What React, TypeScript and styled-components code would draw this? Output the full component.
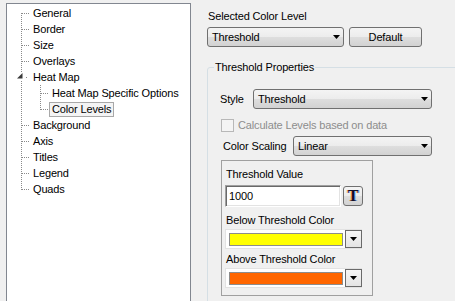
import styled, { createGlobalStyle } from 'styled-components'

const Global = createGlobalStyle`
  html, body {
    margin: 0;
    padding: 0;
    overflow: hidden;
    background: #f0f0f0;
  }
  body {
    font-family: "Liberation Sans", Arial, sans-serif;
    font-size: 11px;
    letter-spacing: -0.15px;
    color: #000;
  }
`

const Window = styled.div`
  display: flex;
  align-items: flex-start;
  width: 455px;
  height: 301px;
  padding: 3px 0 0 6px;
  box-sizing: border-box;
`

/* ---------- tree ---------- */

const TreePanel = styled.div`
  flex: none;
  width: 185px;
  height: 320px;
  box-sizing: border-box;
  border: 1px solid #828790;
  background: #fff;
  padding: 1px 0 0 4px;
`

const TreeRow = styled.div`
  display: flex;
  align-items: center;
  height: 16px;
`

const TreeLabel = styled.span<{ $selected?: boolean }>`
  line-height: 13px;
  padding: 0 2px;
  white-space: nowrap;
  border: 1px solid ${({ $selected }) => ($selected ? '#a8a8a8' : 'transparent')};
  background: ${({ $selected }) => ($selected ? '#f4f4f4' : 'transparent')};
`

type Joint = 'pipe' | 'tee' | 'first' | 'last' | 'open'

const DOT = '#8a8a8a'

function Connector({ kind }: { kind: Joint }) {
  return (
    <svg width="19" height="16" viewBox="0 0 19 16" style={{ flex: 'none', display: 'block' }}>
      {kind === 'pipe' || kind === 'tee' ? (
        <line x1="10.5" y1="0" x2="10.5" y2="16" stroke={DOT} strokeDasharray="1 1" />
      ) : null}
      {kind === 'first' ? (
        <line x1="10.5" y1="8" x2="10.5" y2="16" stroke={DOT} strokeDasharray="1 1" />
      ) : null}
      {kind === 'last' ? (
        <line x1="10.5" y1="0" x2="10.5" y2="9" stroke={DOT} strokeDasharray="1 1" />
      ) : null}
      {kind !== 'pipe' && kind !== 'open' ? (
        <line x1="11" y1="8.5" x2="19" y2="8.5" stroke={DOT} strokeDasharray="1 1" />
      ) : null}
      {kind === 'open' ? (
        <>
          <line x1="10.5" y1="0" x2="10.5" y2="3" stroke={DOT} strokeDasharray="1 1" />
          <line x1="10.5" y1="12" x2="10.5" y2="16" stroke={DOT} strokeDasharray="1 1" />
          <polygon points="11.5,4 11.5,9.5 6,9.5" fill="#3a3a3a" />
          <rect x="15" y="8" width="1" height="1" fill={DOT} />
        </>
      ) : null}
    </svg>
  )
}

const tree: { label: string; joints: Joint[]; selected?: boolean }[] = [
  { label: 'General', joints: ['first'] },
  { label: 'Border', joints: ['tee'] },
  { label: 'Size', joints: ['tee'] },
  { label: 'Overlays', joints: ['tee'] },
  { label: 'Heat Map', joints: ['open'] },
  { label: 'Heat Map Specific Options', joints: ['pipe', 'tee'] },
  { label: 'Color Levels', joints: ['pipe', 'last'], selected: true },
  { label: 'Background', joints: ['tee'] },
  { label: 'Axis', joints: ['tee'] },
  { label: 'Titles', joints: ['tee'] },
  { label: 'Legend', joints: ['tee'] },
  { label: 'Quads', joints: ['last'] },
]

/* ---------- settings ---------- */

const Settings = styled.div`
  flex: none;
  width: 270px;
  margin-left: 16px;
  display: flex;
  flex-direction: column;
`

const Caption = styled.div<{ $top?: number }>`
  line-height: 13px;
  margin-top: ${({ $top }) => $top ?? 0}px;
  padding-left: 1px;
  white-space: nowrap;
`

const Row = styled.div<{ $top?: number; $gap?: number }>`
  display: flex;
  align-items: center;
  gap: ${({ $gap }) => $gap ?? 0}px;
  margin-top: ${({ $top }) => $top ?? 0}px;
`

const aero = `
  border: 1px solid #707070;
  border-radius: 3px;
  background: linear-gradient(#f4f4f4, #ececec 50%, #dedede 50%, #d2d2d2);
`

const Combo = styled.div<{ $width: number }>`
  ${aero}
  flex: none;
  width: ${({ $width }) => $width}px;
  height: 20px;
  box-sizing: border-box;
  display: flex;
  align-items: center;
  justify-content: space-between;
  padding: 0 3px 0 4px;
  line-height: 13px;
`

const PushButton = styled.div<{ $width: number }>`
  ${aero}
  flex: none;
  width: ${({ $width }) => $width}px;
  height: 20px;
  box-sizing: border-box;
  display: flex;
  align-items: center;
  justify-content: center;
`

function Arrow() {
  return (
    <svg width="7" height="4" viewBox="0 0 7 4" style={{ display: 'block', flex: 'none' }}>
      <polygon points="0,0 7,0 3.5,4" fill="#000" />
    </svg>
  )
}

function Dropdown({ value, width }: { value: string; width: number }) {
  return (
    <Combo $width={width}>
      <span>{value}</span>
      <Arrow />
    </Combo>
  )
}

const Group = styled.fieldset`
  margin: 14px 0 0 0;
  padding: 15px 0 12px 12px;
  border: 1px solid #d5dfe5;
  border-radius: 3px;
  width: 270px;
  box-sizing: border-box;
`

const GroupTitle = styled.legend`
  margin-left: -6px;
  padding: 0 1px;
  line-height: 13px;
`

const FieldLabel = styled.div<{ $width: number; $indent?: number }>`
  flex: none;
  width: ${({ $width }) => $width}px;
  padding-left: ${({ $indent }) => $indent ?? 0}px;
  box-sizing: border-box;
  line-height: 13px;
  white-space: nowrap;
`

const CheckRow = styled.div`
  display: flex;
  align-items: center;
  margin: 10px 0 0 1px;
  color: #8d8d8d;
  line-height: 13px;
`

const CheckBox = styled.span`
  flex: none;
  width: 13px;
  height: 13px;
  box-sizing: border-box;
  border: 1px solid #b8b8b8;
  background: #f4f4f4;
  margin-right: 4px;
`

const Panel = styled.div`
  width: 152px;
  height: 136px;
  box-sizing: border-box;
  margin: 4px 0 0 1px;
  border: 1px solid #a0a0a0;
  padding: 7px 0 0 3px;
  display: flex;
  flex-direction: column;
`

const TextBox = styled.div`
  flex: none;
  width: 116px;
  height: 22px;
  box-sizing: border-box;
  background: #fff;
  border-top: 1px solid #a0a0a0;
  border-left: 1px solid #a0a0a0;
  border-right: 1px solid #fff;
  border-bottom: 1px solid #fff;
  box-shadow: inset 1px 1px 0 #696969, inset -1px -1px 0 #e3e3e3;
  padding-left: 3px;
  display: flex;
  align-items: center;
`

const IconButton = styled.div`
  ${aero}
  flex: none;
  width: 20px;
  height: 20px;
  box-sizing: border-box;
  display: flex;
  align-items: center;
  justify-content: center;
  font-family: "Liberation Serif", "Times New Roman", serif;
  font-weight: bold;
  font-size: 16px;
  line-height: 16px;
  color: #10102a;
  text-shadow: -1px 0 0 rgba(240, 130, 20, 0.75), 1px 0 0 rgba(40, 110, 220, 0.6);
`

const ColorPicker = styled.div`
  flex: none;
  width: 137px;
  height: 20px;
  box-sizing: border-box;
  background: #fff;
  border: 1px solid #e2e2e2;
  display: flex;
  align-items: center;
  padding-left: 3px;
`

const Swatch = styled.div<{ $color: string }>`
  flex: none;
  width: 114px;
  height: 13px;
  box-sizing: border-box;
  border: 1px solid #8c8c8c;
  background: ${({ $color }) => $color};
`

const PickerButton = styled.div`
  flex: none;
  width: 17px;
  height: 18px;
  margin-left: 2px;
  box-sizing: border-box;
  border: 1px solid #6a6a6a;
  background: linear-gradient(#f6f6f6, #e4e4e4);
  display: flex;
  align-items: center;
  justify-content: center;
`

function ColorCombo({ color }: { color: string }) {
  return (
    <ColorPicker>
      <Swatch $color={color} />
      <PickerButton>
        <Arrow />
      </PickerButton>
    </ColorPicker>
  )
}

export default function App() {
  return (
    <>
      <Global />
      <Window>
        <TreePanel>
          {tree.map((item) => (
            <TreeRow key={item.label}>
              {item.joints.map((j, i) => (
                <Connector key={i} kind={j} />
              ))}
              <TreeLabel $selected={item.selected}>{item.label}</TreeLabel>
            </TreeRow>
          ))}
        </TreePanel>

        <Settings>
          <Caption $top={7}>Selected Color Level</Caption>
          <Row $top={4} $gap={5}>
            <Dropdown value="Threshold" width={137} />
            <PushButton $width={73}>Default</PushButton>
          </Row>

          <Group>
            <GroupTitle>Threshold Properties</GroupTitle>
            <Row>
              <FieldLabel $width={33}>Style</FieldLabel>
              <Dropdown value="Threshold" width={179} />
            </Row>
            <CheckRow>
              <CheckBox />
              <span>Calculate Levels based on data</span>
            </CheckRow>
            <Row $top={4}>
              <FieldLabel $width={73} $indent={3}>
                Color Scaling
              </FieldLabel>
              <Dropdown value="Linear" width={139} />
            </Row>
            <Panel>
              <Caption>Threshold Value</Caption>
              <Row $top={4} $gap={2}>
                <TextBox>1000</TextBox>
                <IconButton>T</IconButton>
              </Row>
              <Caption $top={7}>Below Threshold Color</Caption>
              <Row $top={2}>
                <ColorCombo color="#ffff00" />
              </Row>
              <Caption $top={4}>Above Threshold Color</Caption>
              <Row $top={2}>
                <ColorCombo color="#ff6600" />
              </Row>
            </Panel>
          </Group>
        </Settings>
      </Window>
    </>
  )
}
